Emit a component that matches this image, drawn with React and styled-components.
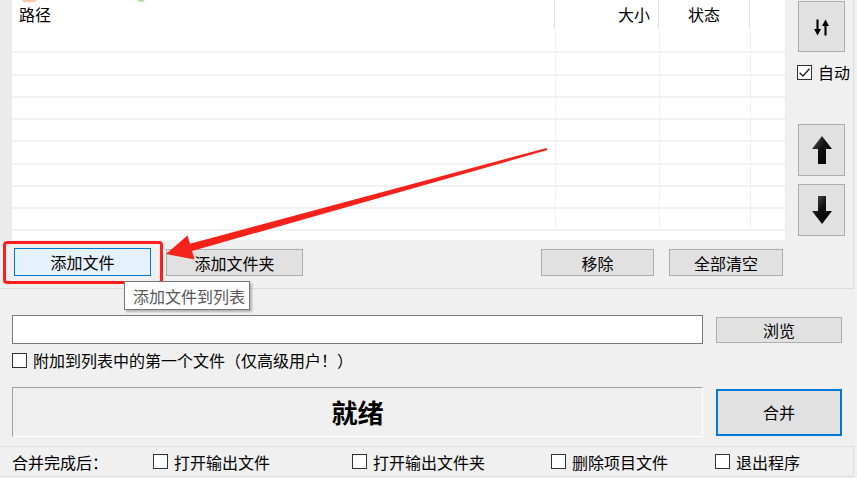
import React from 'react';
import styled, { createGlobalStyle } from 'styled-components';

const GlobalStyle = createGlobalStyle`
  *, *::before, *::after { box-sizing: border-box; }
  html, body { margin: 0; padding: 0; background: #f0f0f0; }
  body { font-family: "Noto Sans CJK SC", "Microsoft YaHei", sans-serif; }
`

const Window = styled.div`
  position: relative;
  width: 857px;
  height: 478px;
  overflow: hidden;
  background: #f0f0f0;
  color: #000;
  font-size: 16px;
  line-height: 1;
  display: flex;
  flex-direction: column;
`
const TopArea = styled.div`
  display: flex;
  width: 854px;
  height: 289px;
  border-bottom: 1px solid #dcdcdc;
  border-right: 1px solid #dcdcdc;
`
const ListColumn = styled.div`
  width: 786px;
  display: flex;
  flex-direction: column;
`
const ListFrame = styled.div`
  height: 240px;
  padding-left: 12px;
  padding-right: 1px;
  background: #ebebeb;
  display: flex;
`
const Table = styled.div`
  position: relative;
  flex: 1;
  background: #fff;
  overflow: hidden;
`
const HeaderRow = styled.div`
  display: grid;
  grid-template-columns: 543px 104px 91px 1fr;
  height: 31px;
`
const HeaderCell = styled.div`
  display: flex;
  align-items: center;
  justify-content: ${p => p.$align || 'flex-start'};
  padding: 0 ${p => p.$pr || 0}px 2px ${p => p.$pl || 0}px;
  border-right: ${p => (p.$last ? 'none' : '1px solid #e3e3e3')};
  height: 30px;
`
const IconStub = styled.span`
  position: absolute;
  top: -4px;
  left: ${p => p.$x}px;
  width: ${p => p.$w}px;
  height: 6px;
  border-radius: 3px;
  background: ${p => p.$c};
`
const BodyRow = styled.div`
  display: grid;
  grid-template-columns: 544px 104px 91px 1fr;
  height: 22.25px;
  border-bottom: 2px solid #f1f1f1;
`
const BodyCell = styled.div`
  border-right: ${p => (p.$last ? 'none' : '1px solid #f0f0f0')};
`
const ButtonRow = styled.div`
  display: flex;
  align-items: flex-start;
  gap: 15px;
  padding: 8px 3px 0 14px;
  height: 48px;
`
const Spacer = styled.div`
  flex: 1;
`
const Btn = styled.button`
  font: inherit;
  color: #000;
  width: ${p => p.$w}px;
  height: ${p => p.$h}px;
  margin-top: ${p => p.$mt || 0}px;
  background: ${p => (p.$hover ? '#e5f1fb' : '#e1e1e1')};
  border: ${p => (p.$focus ? '2px solid #0078d7' : p.$hover ? '1px solid #0078d7' : '1px solid #adadad')};
  border-radius: 0;
  padding: 0;
  display: flex;
  align-items: center;
  justify-content: center;
  flex-shrink: 0;
`
const SideColumn = styled.div`
  flex: 1;
  display: flex;
  flex-direction: column;
  align-items: flex-start;
  padding-left: 12px;
`
const Check = styled.label`
  display: flex;
  align-items: center;
  gap: 6px;
  height: 16px;
  width: ${p => (p.$w ? `${p.$w}px` : 'auto')};
  margin-top: ${p => p.$mt || 0}px;
  margin-left: ${p => p.$ml || 0}px;
  flex-shrink: 0;
  white-space: nowrap;
`
const Box = styled.span`
  width: 15px;
  height: 15px;
  flex-shrink: 0;
  border: 1px solid #333;
  background: #fff;
  display: flex;
  align-items: center;
  justify-content: center;
`
const Middle = styled.div`
  display: flex;
  flex-direction: column;
  padding: 0 12px;
`
const Row = styled.div`
  display: flex;
  align-items: center;
  gap: 13px;
  margin-top: ${p => p.$mt}px;
  height: ${p => p.$h}px;
`
const TextBox = styled.div`
  width: 691px;
  height: 29px;
  background: #fff;
  border: 1px solid #7a7a7a;
`
const StatusBox = styled.div`
  width: 691px;
  height: 50px;
  border: 1px solid;
  border-color: #a0a0a0 #fff #fff #a0a0a0;
  display: flex;
  align-items: center;
  justify-content: center;
  font-size: 26px;
  font-weight: 700;
  padding-bottom: 1px;
`
const BottomBar = styled.div`
  margin-top: 9px;
  width: 854px;
  height: 31px;
  border: 1px solid #dcdcdc;
  border-left: none;
  display: flex;
  align-items: center;
  padding-left: 12px;
`
const BarLabel = styled.span`
  width: 141px;
  flex-shrink: 0;
`
const Tooltip = styled.div`
  position: absolute;
  left: 124px;
  top: 281px;
  width: 126px;
  height: 29px;
  background: #fff;
  border: 1px solid #767676;
  box-shadow: 2px 2px 2px rgba(0, 0, 0, 0.25);
  color: #575757;
  display: flex;
  align-items: center;
  padding-left: 8px;
`
const Highlight = styled.div`
  position: absolute;
  left: 3px;
  top: 241px;
  width: 160px;
  height: 43px;
  border: 3px solid #ff1e1e;
  border-radius: 4px;
`
const Overlay = styled.svg`
  position: absolute;
  left: 0;
  top: 0;
  pointer-events: none;
`

function CheckBox({ checked, children, ...rest }) {
  return (
    <Check {...rest}>
      <Box>
        {checked && (
          <svg width="13" height="13" viewBox="0 0 12 12">
            <path d="M1.5 6.2 L4.6 9.2 L10.6 2.6" fill="none" stroke="#222" strokeWidth="1.3" />
          </svg>
        )}
      </Box>
      {children}
    </Check>
  );
}

function SortIcon() {
  return (
    <svg width="15" height="17" viewBox="0 0 15 17" style={{ marginTop: 2 }}>
      <line x1="3.5" y1="0.5" x2="3.5" y2="11" stroke="#000" strokeWidth="2.1" />
      <polygon points="0,10 7,10 3.5,16.5" fill="#000" />
      <line x1="11.5" y1="6" x2="11.5" y2="16.5" stroke="#000" strokeWidth="2.1" />
      <polygon points="8,7 15,7 11.5,0.5" fill="#000" />
    </svg>
  );
}

function BigArrow({ down }) {
  const pts = down
    ? '6,0 14,0 14,15 20,15 10,28 0,15 6,15'
    : '10,0 20,13 14,13 14,28 6,28 6,13 0,13';
  const id = down ? 'gd' : 'gu';
  return (
    <svg width="20" height="28" viewBox="0 0 20 28">
      <defs>
        <linearGradient id={id} x1="0" y1="0" x2="1" y2="1">
          <stop offset="0" stopColor="#5a5a5a" />
          <stop offset="0.45" stopColor="#111" />
          <stop offset="1" stopColor="#000" />
        </linearGradient>
      </defs>
      <polygon points={pts} fill={`url(#${id})`} />
    </svg>
  );
}

const rows = Array.from({ length: 9 });

export default function App() {
  return (
    <Window>
      <GlobalStyle />
      <TopArea>
        <ListColumn>
          <ListFrame>
            <Table>
              <IconStub $x={10} $w={15} $c="#f6c9a3" />
              <IconStub $x={125} $w={8} $c="#b9e2a8" />
              <HeaderRow>
                <HeaderCell $pl={7}>路径</HeaderCell>
                <HeaderCell $align="flex-end" $pr={8}>大小</HeaderCell>
                <HeaderCell $align="center">状态</HeaderCell>
                <HeaderCell $last />
              </HeaderRow>
              {rows.map((_, i) => (
                <BodyRow key={i}>
                  <BodyCell />
                  <BodyCell />
                  <BodyCell />
                  <BodyCell $last />
                </BodyRow>
              ))}
            </Table>
          </ListFrame>
          <ButtonRow>
            <Btn $w={137} $h={28} $hover>添加文件</Btn>
            <Btn $w={137} $h={27} $mt={1}>添加文件夹</Btn>
            <Spacer />
            <Btn $w={113} $h={27} $mt={1}>移除</Btn>
            <Btn $w={114} $h={27} $mt={1}>全部清空</Btn>
          </ButtonRow>
        </ListColumn>
        <SideColumn>
          <Btn $w={47} $h={51} $mt={1}><SortIcon /></Btn>
          <CheckBox checked $mt={12} $ml={-1}>自动</CheckBox>
          <Btn $w={47} $h={52} $mt={44}><BigArrow /></Btn>
          <Btn $w={47} $h={52} $mt={8}><BigArrow down /></Btn>
        </SideColumn>
      </TopArea>

      <Middle>
        <Row $mt={26} $h={29}>
          <TextBox />
          <Btn $w={126} $h={26}>浏览</Btn>
        </Row>
        <CheckBox $mt={8}>附加到列表中的第一个文件（仅高级用户！）</CheckBox>
        <Row $mt={19} $h={50}>
          <StatusBox>就绪</StatusBox>
          <Btn $w={126} $h={47} $focus>合并</Btn>
        </Row>
      </Middle>

      <BottomBar>
        <BarLabel>合并完成后：</BarLabel>
        <CheckBox $w={199}>打开输出文件</CheckBox>
        <CheckBox $w={199}>打开输出文件夹</CheckBox>
        <CheckBox $w={164}>删除项目文件</CheckBox>
        <CheckBox>退出程序</CheckBox>
      </BottomBar>

      <Highlight />
      <Tooltip>添加文件到列表</Tooltip>
      <Overlay width="857" height="478" viewBox="0 0 857 478">
        <polygon
          points="547.4,150 546.6,148 190,243.7 187.5,235.5 166,254 194.5,259.5 192,251"
          fill="#f5211b"
        />
      </Overlay>
    </Window>
  );
}
